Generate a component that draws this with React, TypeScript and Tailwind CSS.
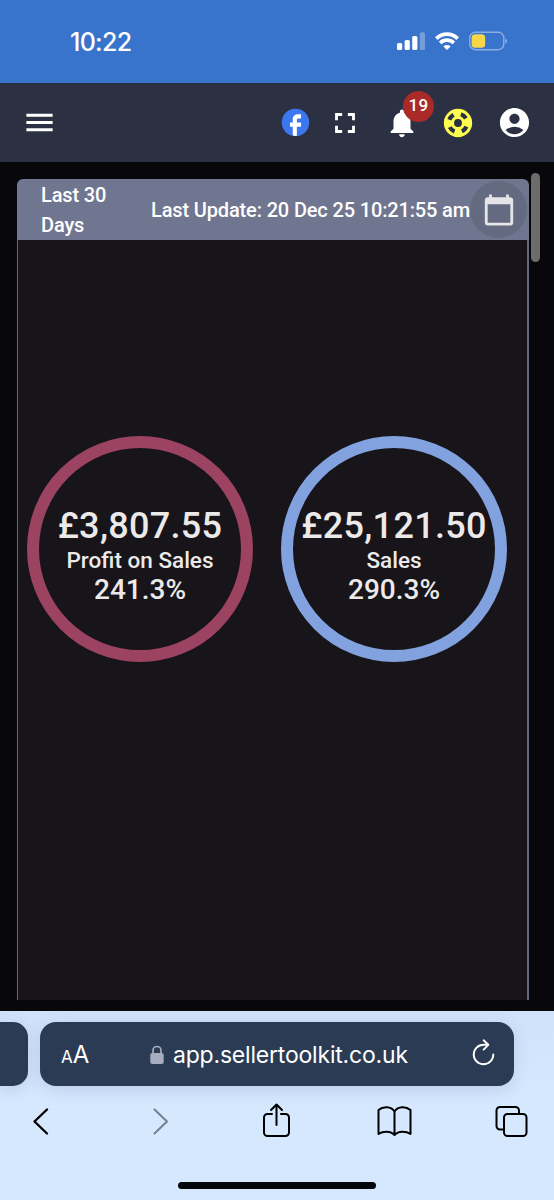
import type { ReactNode } from 'react';
import { MdAccountCircle, MdCalendarToday, MdFacebook, MdFullscreen, MdMenu, MdNotifications } from 'react-icons/md';

const TILES = [
  { value: '£3,807.55', label: 'Profit on Sales', change: '241.3%', ring: 'border-[#9c4362]' },
  { value: '£25,121.50', label: 'Sales', change: '290.3%', ring: 'border-[#82a1df]' },
];

function StatusBar() {
  return (
    <div className="flex h-[83px] items-start justify-between bg-[#3873cc] pr-[47px] pl-[70px] text-white">
      <span className="mt-[26px] font-[Inter,sans-serif] text-[25px] leading-8 font-medium tracking-[-0.7px]">10:22</span>
      <div className="mt-[31px] flex items-center">
        <svg width="28" height="20" viewBox="0 0 28 20" fill="currentColor">
          <rect x="0" y="12" width="5.2" height="7" rx="1.5" />
          <rect x="7.6" y="9" width="5.2" height="10" rx="1.5" />
          <rect x="15.2" y="5" width="5.2" height="14" rx="1.5" />
          <rect x="22.8" y="1.3" width="5.2" height="17.7" rx="1.5" opacity="0.3" />
        </svg>
        <svg className="ml-[10px]" width="24" height="20" viewBox="0 0 24 20" fill="none" stroke="currentColor" strokeWidth="3.7">
          <path d="M1.3 7.6a15.2 15.2 0 0 1 21.4 0" />
          <path d="M5.2 12a9.7 9.7 0 0 1 13.6 0" />
          <path d="M12 19l-3.6-3.6a5.2 5.2 0 0 1 7.2 0Z" fill="currentColor" stroke="none" />
        </svg>
        <svg className="ml-[10px]" width="38" height="20" viewBox="0 0 38 20" fill="none">
          <rect x="0.8" y="1.3" width="34" height="17.4" rx="5.5" stroke="#fff" strokeOpacity="0.42" strokeWidth="1.4" />
          <rect x="2.6" y="3.2" width="13.6" height="13.6" rx="3.6" fill="#f8d648" />
          <path d="M36.3 7.2c2.2 1 2.2 4.6 0 5.6Z" fill="#fff" fillOpacity="0.45" />
        </svg>
      </div>
    </div>
  );
}

function Lifebuoy() {
  return (
    <svg width="34" height="34" viewBox="0 0 24 24">
      <circle cx="12" cy="12" r="10" fill="#ffff4f" />
      <circle cx="12" cy="12" r="6.5" fill="none" stroke="#2c3043" strokeWidth="3" pathLength="360" strokeDasharray="42 48" strokeDashoffset="-24" />
      <circle cx="12" cy="12" r="2.8" fill="#2c3043" />
    </svg>
  );
}

function AppHeader() {
  return (
    <header className="flex h-[79px] items-center justify-between bg-[#2c3043] px-[22px] text-white">
      <MdMenu size={35} />
      <div className="flex items-center">
        <span className="flex bg-[radial-gradient(circle,#fff_13px,transparent_13.5px)] text-[#3b78f0]">
          <MdFacebook size={33} />
        </span>
        <MdFullscreen className="ml-4" size={34} />
        <div className="relative ml-[23px]">
          <MdNotifications size={34} />
          <span className="absolute -top-[15px] left-[18px] flex size-[31px] items-center justify-center rounded-full bg-[#a92a26] text-[17px] font-medium tracking-[0.4px]">
            19
          </span>
        </div>
        <div className="ml-[22px]">
          <Lifebuoy />
        </div>
        <MdAccountCircle className="ml-[22px]" size={35} />
      </div>
    </header>
  );
}

function Tile({ value, label, change, ring }: (typeof TILES)[number]) {
  return (
    <div className={`flex size-[226px] flex-col items-center justify-center rounded-full border-[12px] pt-[12px] font-medium whitespace-nowrap text-[#ece9e9] ${ring}`}>
      <span className="text-[36px] leading-[40px] tracking-[0.3px]">{value}</span>
      <span className="text-[22.5px] leading-[29px]">{label}</span>
      <span className="text-[28px] leading-[30px]">{change}</span>
    </div>
  );
}

function Dashboard() {
  return (
    <main className="flex h-[849px] justify-between bg-[#08080a] pt-[17px] pr-[14px] pb-[11px] pl-[17px]">
      <section className="flex w-[512px] flex-col">
        <div className="flex h-[61px] items-center justify-between rounded-t-[6px] bg-[#70768f] pl-6 text-[20px] leading-[30px] font-medium text-white">
          <span className="w-[90px] tracking-[-0.15px]">Last 30 Days</span>
          <div className="flex items-center whitespace-nowrap">
            <span className="tracking-[-0.15px]">Last Update: 20 Dec 25 10:21:55 am</span>
            <span className="mr-[2px] flex size-[57px] items-center justify-center rounded-full bg-[#646b80] text-[#e5e5e7]">
              <MdCalendarToday size={34} />
            </span>
          </div>
        </div>
        <div className="flex flex-1 items-start justify-between border-r-2 border-l border-[#626880] bg-[#17141a] pt-[196px] pr-[20px] pl-[9px]">
          {TILES.map(t => <Tile key={t.label} {...t} />)}
        </div>
      </section>
      <div className="-mt-[6px] h-[89px] w-[9px] rounded-full bg-[#6c6c6d]" />
    </main>
  );
}

function Glyph({ children, className = '' }: { children: ReactNode; className?: string }) {
  return (
    <svg className={className} width="36" height="40" viewBox="0 0 36 40" fill="none" stroke="currentColor" strokeWidth="2" strokeLinecap="round" strokeLinejoin="round">
      {children}
    </svg>
  );
}

function BrowserBar() {
  return (
    <footer className="h-[189px] overflow-hidden bg-linear-to-b from-[#d0e2fa] to-[#d5e8fe] to-45% pt-[11px] font-[Inter,sans-serif] text-black">
      <div className="flex gap-3 text-white">
        <div className="h-16 w-7 rounded-r-[15px] bg-[#2b3b53] shadow-[0_4px_16px_rgba(80,100,150,0.18)]" />
        <div className="flex h-16 w-[474px] items-center rounded-[16px] bg-[#2b3b53] pr-[18px] pl-[21px] shadow-[0_4px_16px_rgba(80,100,150,0.18)]">
          <span className="mt-1 w-[42px] leading-8 whitespace-nowrap">
            <span className="text-[17px]">A</span>
            <span className="text-[24px]">A</span>
          </span>
          <div className="mt-px ml-[47px] flex items-center">
            <svg width="14" height="20" viewBox="0 0 14 20" fill="#a6adbf">
              <rect x="0.3" y="8" width="13.4" height="11" rx="2" />
              <path d="M3 9V5.5a4 4 0 0 1 8 0V9" fill="none" stroke="#a6adbf" strokeWidth="1.7" />
            </svg>
            <span className="ml-[9px] text-[23px] leading-8 tracking-[-0.2px]">app.sellertoolkit.co.uk</span>
          </div>
          <svg className="ml-auto" width="26" height="32" viewBox="0 0 26 32" fill="none" stroke="currentColor" strokeWidth="1.9" strokeLinecap="round" strokeLinejoin="round">
            <path d="M23.3 16.500a9.800 9.800 0 1 1-9.800-9.800h4.600" />
            <path d="M13.6 2.3l4.7 4.5-4.7 4.8" />
          </svg>
        </div>
      </div>
      <div className="mt-[15px] flex justify-between pr-[25px] pl-[23px]">
        <Glyph><path d="M24 8.5L11.5 20.5 24 32.5" strokeWidth="2.4" /></Glyph>
        <Glyph className="text-[#75808f]"><path d="M13.5 8.5L26 20.5 13.5 32.5" /></Glyph>
        <Glyph>
          <path d="M14 13H9.5A3.5 3.5 0 0 0 6 16.5v15A3.5 3.5 0 0 0 9.5 35h18a3.5 3.5 0 0 0 3.5-3.5v-15a3.5 3.5 0 0 0-3.5-3.5H23" />
          <path d="M18.5 24V3.5M13 9L18.5 3.5 24 9" />
        </Glyph>
        <Glyph>
          <path d="M18.5 10.5C15 5 7 5 2.5 9V33c4.500-3 12-3.500 16 1 4-4.500 11.500-4 16-1V9C30 5 22 5 18.5 10.5ZM18.5 10.5v23.5" />
        </Glyph>
        <Glyph>
          <rect x="11" y="13" width="22.5" height="22" rx="3.5" />
          <path d="M11 28.5H7A3.5 3.5 0 0 1 3.5 25V9.5A3.5 3.5 0 0 1 7 6H22.5A3.5 3.5 0 0 1 26 9.5V13" />
        </Glyph>
      </div>
      <div className="mx-auto mt-[41px] h-[7px] w-[198px] rounded-full bg-[#03060a]" />
    </footer>
  );
}

export default function App() {
  return (
    <div className="h-[1200px] w-[554px] overflow-hidden bg-[#08080a] font-[Roboto,sans-serif]">
      <StatusBar />
      <AppHeader />
      <Dashboard />
      <BrowserBar />
    </div>
  );
}
